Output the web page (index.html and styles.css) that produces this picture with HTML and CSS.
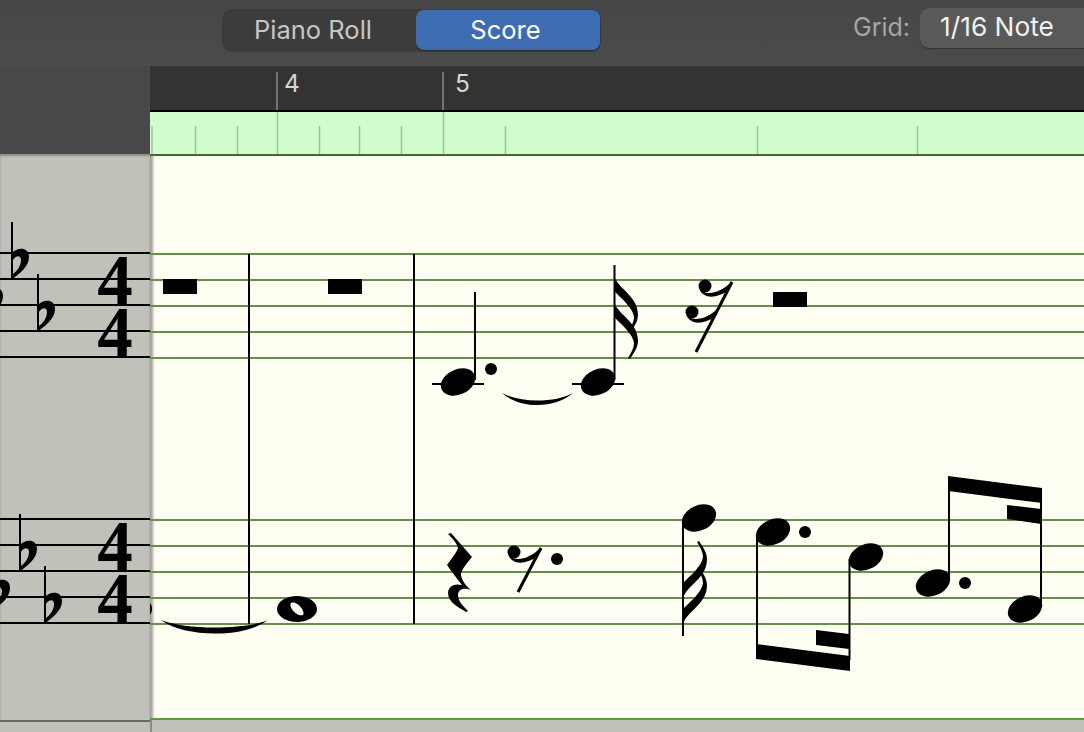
FILE: index.html
```html
<!DOCTYPE html>
<html lang="en">
<head>
<meta charset="utf-8">
<title>Score</title>
<link rel="stylesheet" href="styles.css">
</head>
<body>
<div class="app">
  <header class="toolbar">
    <div class="seg">
      <div class="seg-item">Piano Roll</div>
      <div class="seg-item seg-active">Score</div>
    </div>
    <span class="grid-label">Grid:</span>
    <div class="popup">1/16 Note</div>
  </header>
  <div class="main">
    <aside class="side">
      <div class="side-top"></div>
      <div class="side-body">
        <svg class="side-svg" width="150" height="566" viewBox="0 155 150 566">
          <defs>
            <g id="flat">
              <rect x="-1" y="0" width="2" height="58"/>
              <path fill-rule="evenodd" d="M-1,32 C4,25 17,24 17,35 C17,45 7,52 -1,58 Z M1,38 L1,52 C5,49 9,44 9,38 C9,33 4,33 1,38 Z"/>
            </g>
          </defs>
          <g class="staff-black">
            <path d="M0 254H150M0 280H150M0 306H150M0 332H150M0 358H150"/>
            <path d="M0 520H150M0 546H150M0 572H150M0 598H150M0 624H150"/>
          </g>
          <use href="#flat" x="12" y="223"/>
          <use href="#flat" x="38" y="275"/>
          <use href="#flat" x="-14" y="262"/>
          <use href="#flat" x="20" y="515"/>
          <use href="#flat" x="45" y="567"/>
          <use href="#flat" x="-7" y="554"/>
          <text class="timesig" x="115" y="305">4</text>
          <text class="timesig" x="115" y="357">4</text>
          <text class="timesig" x="115" y="571">4</text>
          <text class="timesig" x="115" y="623">4</text>
        </svg>
      </div>
      <div class="side-foot"></div>
    </aside>
    <section class="content">
      <svg class="ruler" width="934" height="44" viewBox="150 66 934 44">
        <path class="ruler-tick" d="M277 72V110M443 72V110"/>
        <text class="bar-num" x="284" y="92">4</text>
        <text class="bar-num" x="455" y="92">5</text>
      </svg>
      <svg class="strip" width="934" height="42" viewBox="150 112 934 42">
        <path class="tick" d="M152 126V154M195.500 126V154M237.500 126V154M319.500 126V154M359.500 126V154M401.500 126V154M505.500 126V154M757.500 126V154M917.500 126V154M277.500 112V154M443.500 112V154"/>
      </svg>
      <div class="paper">
        <svg class="score" width="934" height="562" viewBox="150 156 934 562">
          <defs>
            <ellipse id="head" rx="18" ry="12.500" transform="rotate(-25)"/>
            <path id="flag" d="M0,0 C3,14 24,20 24,40 C24,47 19,53 16,58 L14,57 C17,52 20,47 20,42 C19,33 8,24 0,16 Z"/>
            <g id="rest-blob">
              <circle r="6.500"/>
              <path d="M-6,2 C-1,10 14,9 27,-5 L23,5 C12,12 -2,14 -6,2 Z"/>
            </g>
          </defs>
          <g class="staff-green">
            <path d="M150 254H1084M150 280H1084M150 306H1084M150 332H1084M150 358H1084"/>
            <path d="M150 520H1084M150 546H1084M150 572H1084M150 598H1084M150 624H1084"/>
          </g>
          <path class="bar" d="M249 254V624M414 254V624"/>

          <rect x="163" y="279" width="34" height="15"/>
          <rect x="328" y="279" width="34" height="15"/>
          <rect x="773" y="292" width="34" height="15"/>

          <ellipse cx="149" cy="609" rx="3" ry="6"/>
          <path d="M161,620 C185,638 245,638 268,620 C245,630 185,630 161,620 Z"/>
          <path fill-rule="evenodd" d="M277,609 a20,13 0 1,0 40,0 a20,13 0 1,0 -40,0 Z M291,603 C288,607 297,617 303,615 C306,612 297,600 291,603 Z"/>

          <path class="ledger" d="M432 384H484M572 384H624"/>
          <use href="#head" x="458" y="382"/>
          <path class="stem" d="M475 292V380"/>
          <circle cx="491" cy="369" r="6"/>
          <path d="M502,393 C520,409 555,409 573,393 C555,403 520,403 502,393 Z"/>
          <use href="#head" x="598" y="382"/>
          <path class="stem" d="M614.500 265V380"/>
          <use href="#flag" x="614" y="275"/>
          <use href="#flag" x="614" y="301"/>

          <use href="#rest-blob" x="705" y="286"/>
          <use href="#rest-blob" x="692" y="312"/>
          <path class="slash" d="M732 282L696 352"/>

          <path d="M448,534 L451,533 L472,557 C465,565 461,571 461,575 C462,581 466,586 471,590 C463,587 458,590 458,595 C458,601 463,606 468,611 L466,612 C458,607 448,602 448,593 C448,586 455,583 462,585 C458,580 452,572 447,565 C452,558 457,552 458,548 C457,543 452,538 448,534 Z"/>
          <use href="#rest-blob" x="514" y="552"/>
          <path class="slash" d="M541 548L518 592"/>
          <circle cx="557" cy="559" r="6"/>

          <use href="#head" x="699" y="518"/>
          <path class="stem" d="M683 520V636"/>
          <g transform="translate(683 625) scale(1 -1)"><use href="#flag"/></g>
          <g transform="translate(683 599) scale(1 -1)"><use href="#flag"/></g>

          <use href="#head" x="773" y="532"/>
          <circle cx="805" cy="532" r="6"/>
          <use href="#head" x="866" y="557"/>
          <path class="stem" d="M757 534V650M849.500 559V660"/>
          <polygon points="756,644 850,656 850,671 756,659"/>
          <polygon points="816,630 849,634 849,649 816,645"/>

          <use href="#head" x="933" y="583"/>
          <circle cx="965" cy="583" r="6"/>
          <use href="#head" x="1025" y="609"/>
          <path class="stem" d="M949 485V581M1041 495V607"/>
          <polygon points="948,476 1042,488 1042,503 948,491"/>
          <polygon points="1007,505 1041,509 1041,524 1007,519"/>
        </svg>
      </div>
      <div class="paper-foot"></div>
    </section>
  </div>
</div>
</body>
</html>
```
FILE: styles.css
```css
* { box-sizing: border-box; }
html, body { margin: 0; padding: 0; }
body {
  width: 1084px;
  height: 732px;
  overflow: hidden;
  background: #484848;
  font-family: Inter, "Liberation Sans", sans-serif;
}
.app { display: flex; flex-direction: column; width: 1084px; height: 732px; }

.toolbar {
  flex: 0 0 66px;
  display: flex;
  align-items: flex-start;
  overflow: hidden;
  padding: 8px 0 0 222px;
  background: linear-gradient(#464646, #4b4b4b);
}
.seg {
  flex: 0 0 379px;
  height: 43px;
  margin-top: 1px;
  display: flex;
  padding: 1px 1px 1px 0;
  border-radius: 11px;
  background: #3c3c3c;
}
.seg-item {
  width: 194px;
  height: 40px;
  padding-right: 12px;
  padding-bottom: 2px;
  display: flex;
  align-items: center;
  justify-content: center;
  font-size: 25.500px;
  color: #c6c6c6;
}
.seg-active {
  width: 184px;
  padding-right: 5px;
  border-radius: 8px;
  background: #3e6cb1;
  color: #fff;
  box-shadow: 0 1px 1px #2a2a2a;
}
.grid-label {
  margin-left: 252px;
  margin-top: 3px;
  font-size: 25px;
  line-height: 32px;
  color: #a6a6a6;
}
.popup {
  flex: 0 0 200px;
  height: 40px;
  margin-left: 10px;
  padding-left: 20px;
  border-radius: 9px;
  background: #595959;
  box-shadow: 0 1px 1px #333;
  font-size: 26.300px;
  line-height: 37px;
  color: #f0f0f0;
}

.main { flex: 1; display: flex; min-height: 0; }
.side { flex: 0 0 150px; display: flex; flex-direction: column; }
.side-top { flex: 0 0 88px; background: #484848; }
.side-body { flex: 0 0 566px; background: #c1c1ba; box-shadow: inset 0 2px 2px #8c8c88; }
.side-svg { display: block; }
.side-foot {
  flex: 1;
  background: #c1c1ba;
  border-top: 2px solid #6a6a68;
}
.content {
  flex: 1;
  display: flex;
  flex-direction: column;
  min-width: 0;
  background: #000;
}
.ruler {
  display: block;
  flex: 0 0 44px;
  background: #333333;
}
.ruler-tick { stroke: #8a8a8a; stroke-width: 1.5; fill: none; }
.bar-num { font: 24.500px Inter, "Liberation Sans", sans-serif; fill: #d6d6d6; }
.strip {
  display: block;
  flex: 0 0 42px;
  background: #cffdce;
  margin-top: 2px;
}
.tick { stroke: #a3c3a0; stroke-width: 1.5; fill: none; }
.paper {
  flex: 0 0 564px;
  background: #fffff3;
  border-top: 2px solid #3f6c2a;
  box-shadow: inset 5px 0 3px -2px #a0a09c;
}
.score { display: block; }
.paper-foot {
  flex: 1;
  background: #c1c1ba;
  border-top: 2px solid #5c9a44;
  box-shadow: inset 2px 0 0 #8c8c88;
}
.staff-black path { stroke: #000; stroke-width: 2; fill: none; }
.staff-green path { stroke: #668f4b; stroke-width: 2; fill: none; }
.bar, .stem { stroke: #000; stroke-width: 2; fill: none; }
.ledger { stroke: #000; stroke-width: 2; fill: none; }
.slash { stroke: #000; stroke-width: 3; fill: none; }
.timesig {
  font: bold 71px "Liberation Serif", serif;
  text-anchor: middle;
  fill: #000;
}
```
